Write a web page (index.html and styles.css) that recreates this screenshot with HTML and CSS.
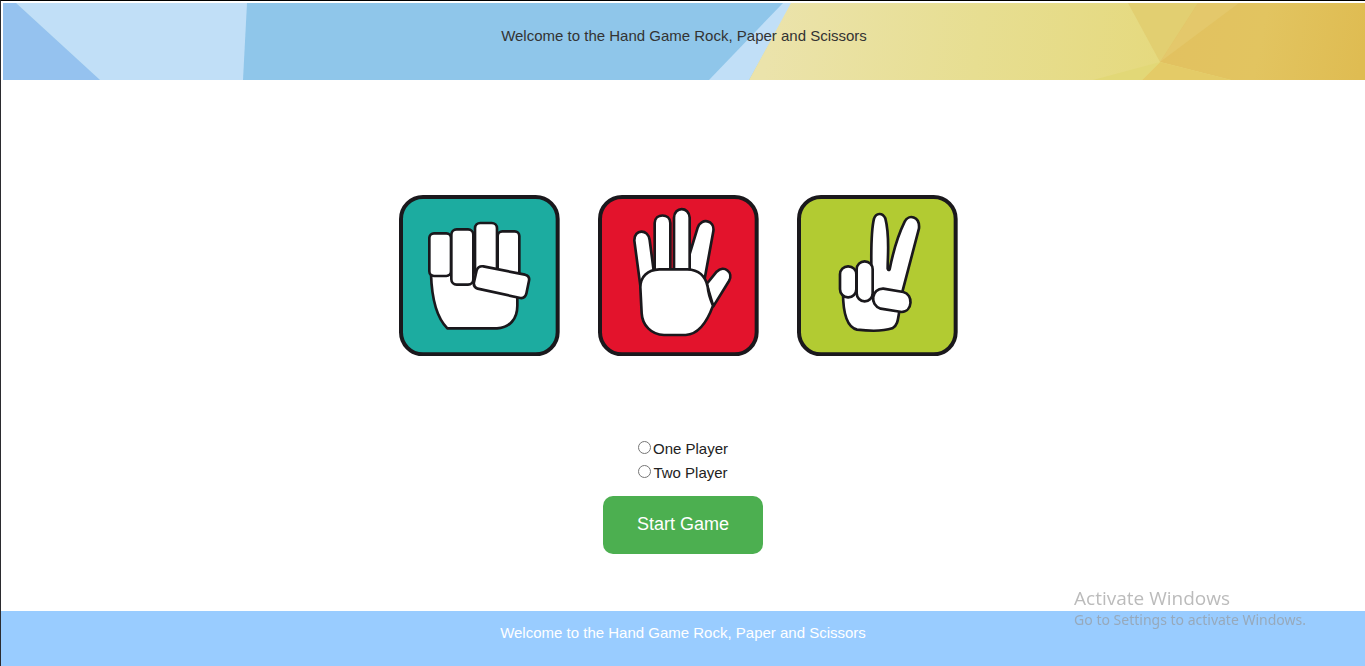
FILE: index.html
```html
<!DOCTYPE html>
<html lang="en">
<head>
<meta charset="utf-8">
<title>Rock, Paper and Scissors</title>
<link rel="stylesheet" href="styles.css">
</head>
<body>
<div class="page">
  <header class="banner">
    <svg class="banner-art" viewBox="0 0 1362 77" preserveAspectRatio="none" aria-hidden="true">
      <defs>
        <linearGradient id="gold" gradientUnits="userSpaceOnUse" x1="770" y1="0" x2="1362" y2="77">
          <stop offset="0" stop-color="#ebe3ab"/>
          <stop offset=".35" stop-color="#e7de91"/>
          <stop offset=".68" stop-color="#e5d97d"/>
          <stop offset="1" stop-color="#e3d173"/>
        </linearGradient>
        <linearGradient id="amber" gradientUnits="userSpaceOnUse" x1="1160" y1="0" x2="1362" y2="40">
          <stop offset="0" stop-color="#e2c160"/>
          <stop offset=".5" stop-color="#e2c460"/>
          <stop offset="1" stop-color="#dfbc52"/>
        </linearGradient>
      </defs>
      <rect width="1362" height="77" fill="#8fc6ea"/>
      <path d="M0 0H13L97 77H0Z" fill="#95c2ef"/>
      <path d="M13 0H244L240 77H97Z" fill="#c1dff7"/>
      <path d="M780 0H789L746 77H706Z" fill="#c1dff7"/>
      <path d="M788 0H1362V77H746Z" fill="url(#gold)"/>
      <path d="M1125 0H1195L1157 59Z" fill="#e2cf71"/>
      <path d="M1195 0H1362V77H1228L1157 59Z" fill="url(#amber)"/>
      <path d="M1195 0H1236L1157 59Z" fill="#e4c86b"/>
      <path d="M1157 59L1228 77H1139Z" fill="#e4cb67"/>
      <path d="M1157 59L1139 77H1090Z" fill="#e2d877"/>
    </svg>
    <p class="banner-text">Welcome to the Hand Game Rock, Paper and Scissors</p>
  </header>

  <main class="game">
    <div class="hands">
      <svg class="hand" viewBox="26 28 483 483" role="img" aria-label="Rock">
        <rect class="tile rock" x="32" y="34" width="470" height="472" rx="66"/>
        <g class="ink">
          <path d="M122 265C124 330 138 395 171 428H320C358 426 381 400 381 360V250H122Z"/>
          <rect x="322" y="137" width="65" height="150" rx="14"/>
          <rect x="254" y="112" width="66" height="160" rx="16"/>
          <rect x="117" y="143" width="65" height="128" rx="14"/>
          <rect x="183" y="131" width="66" height="166" rx="16"/>
          <path d="M279 242L404 267Q419 271 416 285L408 324Q404 339 390 337L262 309Q248 304 251 290L259 254Q264 240 279 242Z"/>
        </g>
      </svg>
      <svg class="hand" viewBox="26 28 483 483" role="img" aria-label="Paper">
        <rect class="tile paper" x="32" y="34" width="470" height="472" rx="66"/>
        <g class="ink">
          <path d="M153 300L135 165C134 129 177 129 181 163L195 270Z"/>
          <path d="M196 270V112C197 82 242 82 243 112V270Z"/>
          <path d="M300 270V208L325 126C335 95 377 103 372 137L344 290Z"/>
          <path d="M254 270V96C255 62 299 62 301 96V270Z"/>
          <path d="M352 295L382 258C404 237 434 260 419 286L372 362Z"/>
          <path d="M153 305C153 273 175 252 210 251H294C328 252 349 272 355 303C357 327 364 344 371 360C354 407 330 446 289 448H224C185 447 159 418 157 383Z"/>
        </g>
      </svg>
      <svg class="hand" viewBox="23 28 483 483" role="img" aria-label="Scissors">
        <rect class="tile scissors" x="29" y="34" width="470" height="472" rx="66"/>
        <g class="ink">
          <path d="M161 320C161 375 169 424 203 432C238 436 281 437 309 428C326 419 326 399 331 370L340 315L389 128C392 92 358 84 346 108C325 151 310 205 301 251Q297 256 295 249C295 205 302 151 288 98C279 79 260 82 254 99C244 140 246 190 246 250V320Z"/>
          <rect x="152" y="242" width="49" height="93" rx="24"/>
          <rect x="202" y="227" width="48" height="120" rx="24"/>
          <path d="M282 309L342 319C373 327 370 377 337 379L274 369C239 357 247 308 282 309Z"/>
        </g>
      </svg>
    </div>

    <form class="setup">
      <label class="choice"><input class="radio" type="radio" name="players" value="1">One Player</label>
      <label class="choice"><input class="radio" type="radio" name="players" value="2">Two Player</label>
      <button class="start" type="button">Start Game</button>
    </form>
  </main>

  <footer class="footer">Welcome to the Hand Game Rock, Paper and Scissors</footer>
</div>
<aside class="notice">
  <p class="notice-title">Activate Windows</p>
  <p class="notice-text">Go to Settings to activate Windows.</p>
</aside>
</body>
</html>
```
FILE: styles.css
```css
* {
  box-sizing: border-box;
}

body {
  margin: 0;
  background: #fff;
  color: #333;
  font-family: "Liberation Sans", Arial, sans-serif;
  font-size: 15px;
  line-height: 24px;
}

p {
  margin: 0;
}

.page {
  display: flex;
  flex-direction: column;
  min-height: 100vh;
  border-top: 1px solid #000;
  border-left: 1px solid #2b2b2f;
}

.banner {
  position: relative;
  margin: 2px 0 0 2px;
  padding: 21px 0 32px;
  text-align: center;
}

.banner-art {
  position: absolute;
  inset: 0;
  width: 100%;
  height: 100%;
}

.banner-text {
  position: relative;
}

.game {
  display: flex;
  flex: 1;
  flex-direction: column;
  align-items: center;
  padding-top: 115px;
}

.hands {
  display: flex;
  gap: 38px;
  padding-right: 9px;
}

.hand {
  width: 161px;
  height: 161px;
}

.tile {
  stroke: #1a181c;
  stroke-width: 12;
}

.rock {
  fill: #1caca0;
}

.paper {
  fill: #e3132c;
}

.scissors {
  fill: #b2cb32;
}

.ink {
  fill: #fff;
  stroke: #1a181c;
  stroke-width: 8;
  stroke-linejoin: round;
}

.setup {
  display: flex;
  flex-direction: column;
  align-items: center;
  padding-top: 81px;
}

.choice {
  display: flex;
  align-items: flex-start;
  color: #222;
}

.radio {
  width: 13px;
  height: 13px;
  margin: 4px 2px 0 0;
}

.start {
  width: 160px;
  height: 58px;
  margin: 11px 0 57px;
  padding: 0 0 2px;
  border: 0;
  border-radius: 10px;
  background: #4caf50;
  color: #fff;
  font-family: inherit;
  font-size: 18px;
}

.footer {
  padding: 10px 0 21px;
  background: #99ccff;
  color: #fff;
  text-align: center;
}

.notice {
  position: fixed;
  right: 59px;
  bottom: 36px;
  color: rgba(150, 150, 150, 0.65);
  font-family: "Open Sans", "Noto Sans", sans-serif;
}

.notice-title {
  font-size: 19px;
}

.notice-text {
  font-family: "Noto Sans", "Open Sans", sans-serif;
  font-size: 14px;
  line-height: 20px;
}
```
